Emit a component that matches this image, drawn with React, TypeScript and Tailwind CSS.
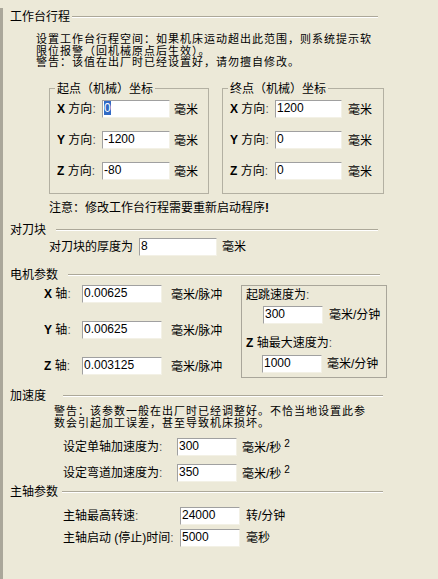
import React from "react";

const FONT = "font-[family-name:'Liberation_Sans','Noto_Sans_CJK_SC',sans-serif]";

function Field({ w, value, selected }: { w: string; value: string; selected?: boolean }) {
  return (
    <div
      className={`${w} h-[18px] shrink-0 bg-white border border-t-[#a0a0a0] border-l-[#a0a0a0] border-r-[#f3f1e6] border-b-[#f3f1e6] pl-[1px] text-[12px] leading-[14px] text-black overflow-hidden whitespace-nowrap`}
    >
      {selected ? <span className="bg-[#316ac5] text-white">{value}</span> : value}
    </div>
  );
}

function Header({ title, lineMl, width }: { title: string; lineMl: string; width: string }) {
  return (
    <div className={`flex items-center h-[14px] ml-[7px] ${width}`}>
      <span className="text-[12px] leading-[14px] whitespace-nowrap">{title}</span>
      <div className={`flex-1 ${lineMl} border-t border-t-[#aca899] border-b border-b-white`} />
    </div>
  );
}

function AxisLabel({ axis, text, w }: { axis: string; text: string; w: string }) {
  return (
    <div className={`${w} shrink-0 text-[12px] leading-[14px] whitespace-nowrap`}>
      <span className="font-bold">{axis}</span> {text}
      <span className="text-[#555]">:</span>
    </div>
  );
}

function CoordBox({ title, width, labelPl, labelW, inputW, unitMl, values, selectFirst }: {
  title: string; width: string; labelPl: string; labelW: string; inputW: string; unitMl: string; values: string[]; selectFirst?: boolean;
}) {
  const axes = ["X", "Y", "Z"];
  return (
    <fieldset className={`${width} border border-[#b3b0a2] pb-[13px]`}>
      <legend className="ml-[5px] px-[2px] text-[12px] leading-[14px]">{title}</legend>
      <div className="flex flex-col gap-[13px] mt-[4px]">
        {axes.map((a, i) => (
          <div key={a} className={`flex items-center h-[18px] ${labelPl}`}>
            <AxisLabel axis={a} text="方向" w={labelW} />
            <Field w={inputW} value={values[i]} selected={selectFirst && i === 0} />
            <span className={`${unitMl} text-[12px] leading-[14px] mt-[3px]`}>毫米</span>
          </div>
        ))}
      </div>
    </fieldset>
  );
}

export default function App() {
  return (
    <div className={`w-[438px] h-[579px] bg-[#ece9d8] pt-[8px] flex flex-col text-black ${FONT} overflow-hidden`}>
      <div className="flex-1 border-l-[3px] border-l-[#aaa79a]">
        {/* 工作台行程 */}
        <div className="mt-[2px]">
          <Header title="工作台行程" lineMl="ml-[2px]" width="w-[368px]" />
        </div>
        <div className="mt-[10px] ml-[33px] text-[11px] tracking-[1px] leading-[11.5px] whitespace-nowrap">
          <div>设置工作台行程空间：如果机床运动超出此范围，则系统提示软</div>
          <div>限位报警（回机械原点后生效）。</div>
          <div>警告：该值在出厂时已经设置好，请勿擅自修改。</div>
        </div>
        <div className="flex mt-[13px] ml-[46px] gap-[13px]">
          <CoordBox
            title="起点（机械）坐标"
            width="w-[160px]"
            labelPl="pl-[7px]"
            labelW="w-[45px]"
            inputW="w-[68px]"
            unitMl="ml-[4px]"
            values={["0", "-1200", "-80"]}
            selectFirst
          />
          <CoordBox
            title="终点（机械）坐标"
            width="w-[162px]"
            labelPl="pl-[7px]"
            labelW="w-[45px]"
            inputW="w-[67px]"
            unitMl="ml-[6px]"
            values={["1200", "0", "0"]}
          />
        </div>
        <div className="mt-[7px] ml-[46px] text-[12px] leading-[14px] whitespace-nowrap">
          注意：修改工作台行程需要重新启动程序<span className="font-bold">!</span>
        </div>

        {/* 对刀块 */}
        <div className="mt-[8px]">
          <Header title="对刀块" lineMl="ml-[10px]" width="w-[368px]" />
        </div>
        <div className="flex items-center h-[18px] mt-[1px] ml-[46px]">
          <span className="w-[90px] shrink-0 text-[12px] leading-[14px]">对刀块的厚度为</span>
          <Field w="w-[78px]" value="8" />
          <span className="ml-[5px] text-[12px] leading-[14px]">毫米</span>
        </div>

        {/* 电机参数 */}
        <div className="mt-[12px]">
          <Header title="电机参数" lineMl="ml-[10px]" width="w-[370px]" />
        </div>
        <div className="flex mt-[3px] ml-[41px]">
          <div className="w-[197px] shrink-0 flex flex-col gap-[18px]">
            {[
              ["X", "0.00625"],
              ["Y", "0.00625"],
              ["Z", "0.003125"],
            ].map(([a, v]) => (
              <div key={a} className="flex items-center h-[18px]">
                <AxisLabel axis={a} text="轴" w="w-[38px]" />
                <Field w="w-[80px]" value={v} />
                <span className="ml-[9px] text-[12px] leading-[14px] mt-[2px] whitespace-nowrap">毫米/脉冲</span>
              </div>
            ))}
          </div>
          <div className="w-[146px] h-[93px] shrink-0 border border-[#a9a69a] pl-[4px] pt-[2px]">
            <div className="text-[12px] leading-[14px] whitespace-nowrap">
              起跳速度为<span className="text-[#555]">:</span>
            </div>
            <div className="flex items-center h-[18px] mt-[4px] ml-[17px]">
              <Field w="w-[60px]" value="300" />
              <span className="ml-[6px] text-[12px] leading-[14px] whitespace-nowrap">毫米/分钟</span>
            </div>
            <div className="mt-[12px] text-[12px] leading-[14px] whitespace-nowrap">
              <span className="font-bold">Z</span> 轴最大速度为<span className="text-[#555]">:</span>
            </div>
            <div className="flex items-center h-[18px] mt-[5px] ml-[16px]">
              <Field w="w-[60px]" value="1000" />
              <span className="ml-[5px] text-[12px] leading-[14px] whitespace-nowrap">毫米/分钟</span>
            </div>
          </div>
        </div>

        {/* 加速度 */}
        <div className="mt-[11px]">
          <Header title="加速度" lineMl="ml-[17px]" width="w-[373px]" />
        </div>
        <div className="mt-[2px] ml-[51px] text-[11px] tracking-[1px] leading-[12px] whitespace-nowrap">
          <div>警告：该参数一般在出厂时已经调整好。不恰当地设置此参</div>
          <div>数会引起加工误差，甚至导致机床损坏。</div>
        </div>
        <div className="flex flex-col gap-[8px] mt-[9px] ml-[60px]">
          {[
            ["设定单轴加速度为", "300"],
            ["设定弯道加速度为", "350"],
          ].map(([l, v]) => (
            <div key={l} className="flex items-center h-[18px]">
              <span className="w-[114px] shrink-0 text-[12px] leading-[14px] whitespace-nowrap">
                {l}<span className="text-[#555]">:</span>
              </span>
              <Field w="w-[60px]" value={v} />
              <span className="ml-[5px] text-[12px] leading-[14px] whitespace-nowrap mt-[2px]">
                毫米/秒<sup className="ml-[3px] text-[10px]">2</sup>
              </span>
            </div>
          ))}
        </div>

        {/* 主轴参数 */}
        <div className="mt-[3px]">
          <Header title="主轴参数" lineMl="ml-[4px]" width="w-[373px]" />
        </div>
        <div className="flex flex-col gap-[4px] mt-[8px] ml-[60px]">
          <div className="flex items-center h-[18px]">
            <span className="w-[117px] shrink-0 text-[12px] leading-[14px] whitespace-nowrap">
              主轴最高转速<span className="text-[#555]">:</span>
            </span>
            <Field w="w-[60px]" value="24000" />
            <span className="ml-[6px] text-[12px] leading-[14px] whitespace-nowrap">转/分钟</span>
          </div>
          <div className="flex items-center h-[18px]">
            <span className="w-[117px] shrink-0 text-[12px] leading-[14px] whitespace-nowrap">
              主轴启动 (停止)时间<span className="text-[#555]">:</span>
            </span>
            <Field w="w-[60px]" value="5000" />
            <span className="ml-[6px] text-[12px] leading-[14px] whitespace-nowrap">毫秒</span>
          </div>
        </div>
      </div>
    </div>
  );
}
